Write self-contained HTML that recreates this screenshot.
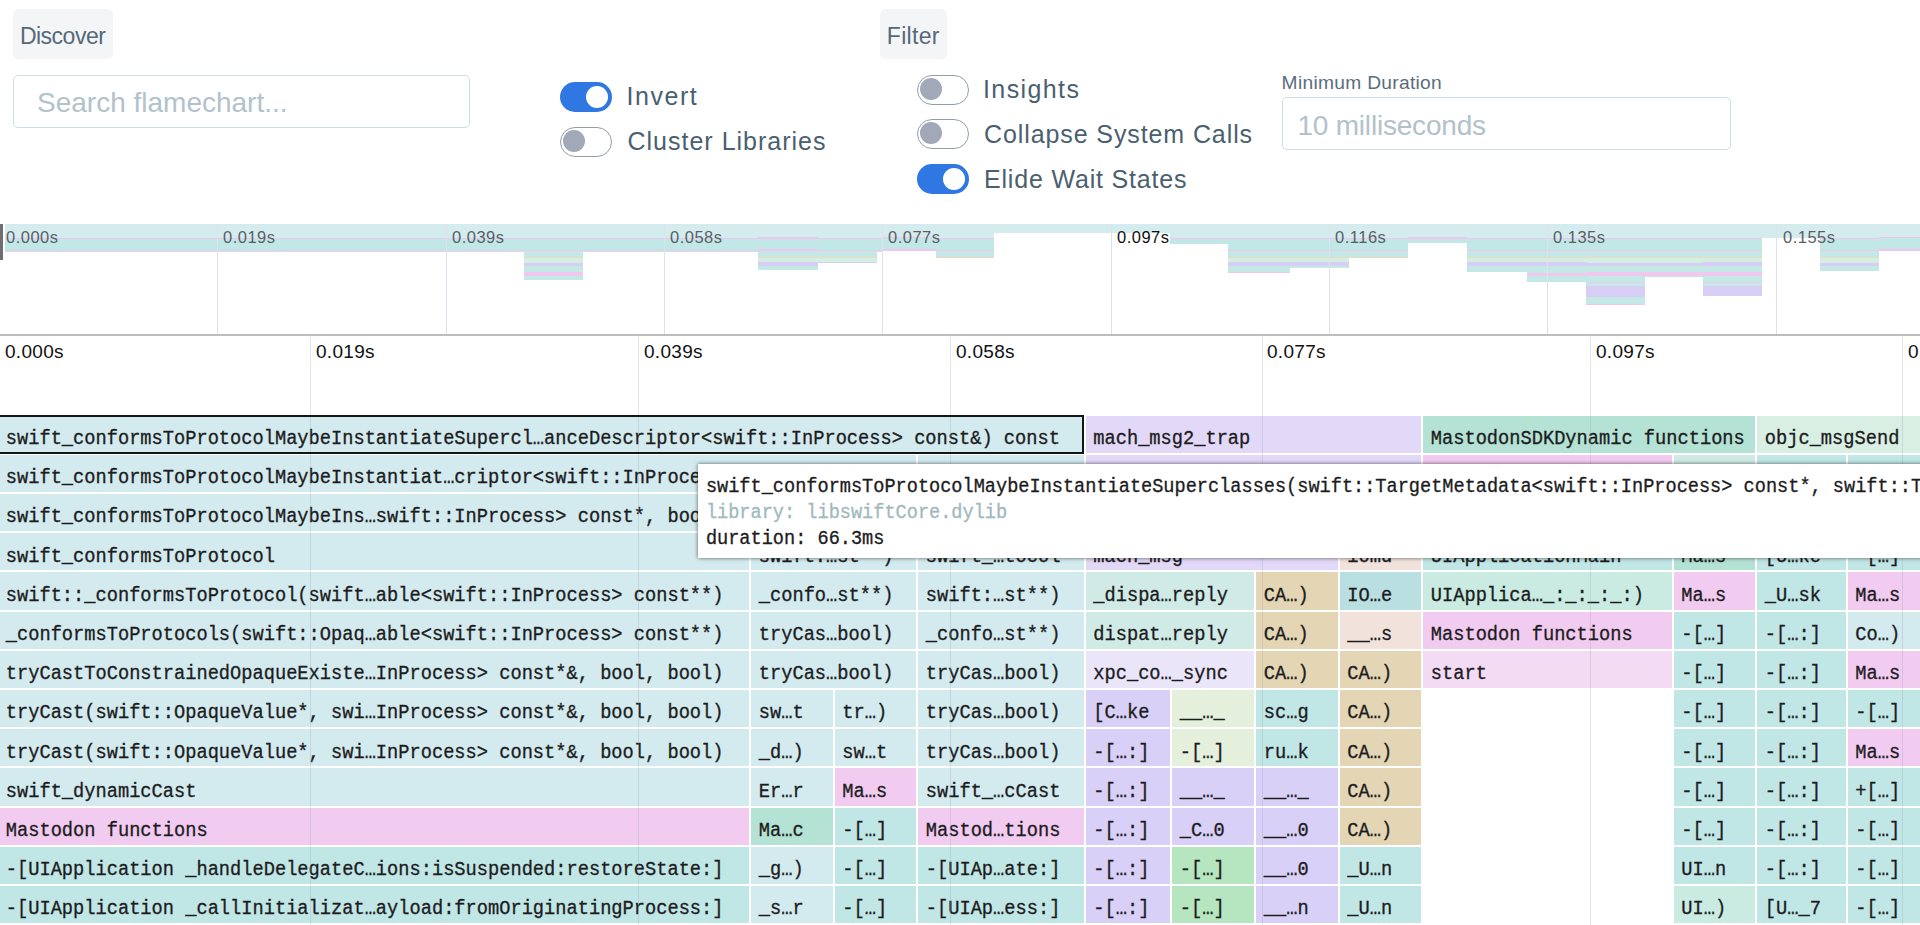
<!DOCTYPE html>
<html><head><meta charset="utf-8">
<style>
*{margin:0;padding:0;box-sizing:border-box}
html,body{width:1920px;height:925px;overflow:hidden;background:#fff;font-family:"Liberation Sans",sans-serif}
.abs{position:absolute}
.btn{position:absolute;top:9px;height:50px;background:#f4f5f7;border-radius:6px;color:#4d6170;font-size:22px;line-height:50px;padding-left:8px}
.inp{position:absolute;border:1.5px solid #cfdce6;border-radius:5px;background:#fff;color:#a9bbc6;font-size:26px}
.tg{position:absolute;width:52px;height:30px;border-radius:15px}
.tg.on{background:#2f77e2}
.tg.on::after{content:"";position:absolute;left:26px;top:4px;width:22px;height:22px;border-radius:50%;background:#fff}
.tg.off{border:1.7px solid #939eaa;background:#fff}
.tg.off::after{content:"";position:absolute;left:2.3px;top:2.3px;width:22px;height:22px;border-radius:50%;background:#a1a9b8}
.lb{position:absolute;line-height:1;white-space:nowrap}
.lbl{position:absolute;color:#4d6170;font-size:24px;line-height:30px;white-space:nowrap}
.mm{position:absolute;top:224px;background:linear-gradient(#d5ecef 0px,#d5ecef 13.5px,#efc6ed 13.5px,#efc6ed 14.5px,#c2e7e7 14.5px,#c2e7e7 25.5px,#efc6ed 25.5px,#efc6ed 27px,#c4e8e6 27px,#c4e8e6 33px,#e8dcc0 33px,#e8dcc0 34px,#d4eee2 34px,#d4eee2 38.5px,#d8cdf5 38.5px,#d8cdf5 42px,#c3e8e6 42px,#c3e8e6 48.5px,#f0c8ee 48.5px,#f0c8ee 52px,#c4e8e6 52px,#c4e8e6 58px,#f0c8ee 58px,#f0c8ee 59px,#c4e8e6 59px,#c4e8e6 62.5px,#d8cdf5 62.5px,#d8cdf5 73px,#c3e8e6 73px,#c3e8e6 80px,#f0c8ee 80px,#f0c8ee 81.5px,#c4e8e6 81.5px,#c4e8e6 120px)}
.mgl{position:absolute;top:224px;height:110px;width:1px;background:#dfe2ea}
.mlab{position:absolute;top:229px;font-size:16.5px;letter-spacing:0.5px;color:#5a5f66;line-height:16px}
.tgl{position:absolute;top:335px;height:590px;width:1px;background:rgba(150,160,180,0.28)}
.tlab{position:absolute;top:342px;font-size:19px;letter-spacing:0.3px;color:#111;line-height:20px}
.b{position:absolute;height:37.2px;font-family:"Liberation Mono",monospace;font-size:18.7px;line-height:37px;padding-left:7.8px;padding-top:5.4px;color:#1d1d1f;white-space:nowrap;overflow:hidden}
.b span{display:inline-block;transform:scaleY(1.11);transform-origin:0 23px;-webkit-text-stroke:0.3px #1a1a1a}
.tt span{display:inline-block;transform:scaleY(1.11);transform-origin:0 20px;-webkit-text-stroke:0.3px #1a1a1a}
.tt span.lib{-webkit-text-stroke:0.3px #9fb9be}
.tt{position:absolute;left:698px;top:463.5px;width:1300px;height:94px;background:#fff;box-shadow:0 0 4px rgba(0,0,0,0.6);font-family:"Liberation Mono",monospace;font-size:18.6px;color:#1d1d1f;white-space:nowrap;padding:11.2px 0 0 7.9px;line-height:26px}
</style></head><body>
<div class="btn" style="left:13px;width:100px"></div>
<div class="inp" style="left:13px;top:75px;width:457px;height:53px"></div>
<div class="tg on" style="left:560px;top:82px"></div>
<div class="tg off" style="left:560px;top:127px"></div>
<div class="btn" style="left:880px;width:67px"></div>
<div class="tg off" style="left:917px;top:75px"></div>
<div class="tg off" style="left:917px;top:119px"></div>
<div class="tg on" style="left:917px;top:164px"></div>
<div class="inp" style="left:1282px;top:97px;width:449px;height:53px"></div>
<div class="lb" style="left:19.90px;top:24.83px;font-size:23px;letter-spacing:-0.5px;color:#55697a">Discover</div>
<div class="lb" style="left:37.00px;top:89.40px;font-size:28px;letter-spacing:0px;color:#b2c2cb">Search flamechart...</div>
<div class="lb" style="left:626.50px;top:83.94px;font-size:25px;letter-spacing:1.55px;color:#4a5f70">Invert</div>
<div class="lb" style="left:627.50px;top:128.59px;font-size:25px;letter-spacing:1.0px;color:#4a5f70">Cluster Libraries</div>
<div class="lb" style="left:886.80px;top:25.03px;font-size:23px;letter-spacing:0.3px;color:#55697a">Filter</div>
<div class="lb" style="left:983.00px;top:76.64px;font-size:25px;letter-spacing:1.4px;color:#4a5f70">Insights</div>
<div class="lb" style="left:984.00px;top:121.94px;font-size:25px;letter-spacing:0.9px;color:#4a5f70">Collapse System Calls</div>
<div class="lb" style="left:984.00px;top:166.54px;font-size:25px;letter-spacing:0.82px;color:#4a5f70">Elide Wait States</div>
<div class="lb" style="left:1281.60px;top:73.45px;font-size:19.2px;letter-spacing:0.3px;color:#5a6d7c">Minimum Duration</div>
<div class="lb" style="left:1297.40px;top:112.30px;font-size:28px;letter-spacing:-0.2px;color:#b2c2cb">10 milliseconds</div>
<!-- minimap -->
<div class="abs" style="left:0;top:224px;width:3px;height:36px;background:#6d6f75"></div>
<div class="mm" style="left:5px;width:519px;height:28px"></div>
<div class="mm" style="left:524px;width:59px;height:56px"></div>
<div class="mm" style="left:583px;width:81px;height:28px"></div>
<div class="mm" style="left:664px;width:94px;height:28px"></div>
<div class="mm" style="left:758px;width:60px;height:46px"></div>
<div class="mm" style="left:818px;width:59px;height:39px"></div>
<div class="mm" style="left:877px;width:5px;height:28px"></div>
<div class="mm" style="left:882px;width:54px;height:27px"></div>
<div class="mm" style="left:936px;width:58px;height:34px"></div>
<div class="mm" style="left:994px;width:117px;height:9px"></div>
<div class="mm" style="left:1111px;width:59px;height:9px"></div>
<div class="mm" style="left:1170px;width:58px;height:20px"></div>
<div class="mm" style="left:1228px;width:62px;height:49px"></div>
<div class="mm" style="left:1290px;width:59px;height:44px"></div>
<div class="mm" style="left:1349px;width:59px;height:34px"></div>
<div class="mm" style="left:1408px;width:59px;height:19px"></div>
<div class="mm" style="left:1467px;width:60px;height:48px"></div>
<div class="mm" style="left:1527px;width:59px;height:58px"></div>
<div class="mm" style="left:1586px;width:59px;height:81px"></div>
<div class="mm" style="left:1645px;width:58px;height:53px"></div>
<div class="mm" style="left:1703px;width:59px;height:72px"></div>
<div class="mm" style="left:1762px;width:58px;height:14px"></div>
<div class="mm" style="left:1820px;width:59px;height:47px"></div>
<div class="mm" style="left:1879px;width:41px;height:27px"></div>
<div class="mgl" style="left:217px"></div><div class="mgl" style="left:446px"></div><div class="mgl" style="left:664px"></div><div class="mgl" style="left:882px"></div>
<div class="mgl" style="left:1111px"></div><div class="mgl" style="left:1329px"></div><div class="mgl" style="left:1547px"></div><div class="mgl" style="left:1776px"></div>
<div class="mlab" style="left:6px">0.000s</div><div class="mlab" style="left:223px">0.019s</div><div class="mlab" style="left:452px">0.039s</div><div class="mlab" style="left:670px">0.058s</div>
<div class="mlab" style="left:888px">0.077s</div><div class="mlab" style="left:1117px;color:#111">0.097s</div><div class="mlab" style="left:1335px">0.116s</div><div class="mlab" style="left:1553px">0.135s</div><div class="mlab" style="left:1783px">0.155s</div>
<div class="abs" style="left:0;top:334px;width:1920px;height:1.5px;background:#bdbdbd"></div>
<!-- time axis -->
<div class="tlab" style="left:5px">0.000s</div><div class="tlab" style="left:316px">0.019s</div><div class="tlab" style="left:644px">0.039s</div>
<div class="tlab" style="left:956px">0.058s</div><div class="tlab" style="left:1267px">0.077s</div><div class="tlab" style="left:1596px">0.097s</div><div class="tlab" style="left:1908px">0.116s</div>
<!-- flamechart -->
<div class="b" style="left:-2px;top:415.600px;width:1085.50px;background:#d3eaee"><span>swift_conformsToProtocolMaybeInstantiateSupercl…anceDescriptor&lt;swift::InProcess&gt; const&amp;) const</span></div>
<div class="b" style="left:1085.5px;top:415.600px;width:335.50px;background:#e2d8f8"><span>mach_msg2_trap</span></div>
<div class="b" style="left:1423px;top:415.600px;width:332.00px;background:#b4e2d4"><span>MastodonSDKDynamic functions</span></div>
<div class="b" style="left:1757px;top:415.600px;width:163.00px;background:#d9efe4"><span>objc_msgSend</span></div>
<div class="b" style="left:-2px;top:454.800px;width:918.00px;background:#d3eaee"><span>swift_conformsToProtocolMaybeInstantiat…criptor&lt;swift::InProcess&gt; const*) const</span></div>
<div class="b" style="left:918px;top:454.800px;width:165.50px;background:#d3eaee"><span>swift_…tocol</span></div>
<div class="b" style="left:1085.5px;top:454.800px;width:335.50px;background:#e2d8f8"><span>mach_msg2_trap</span></div>
<div class="b" style="left:1423px;top:454.800px;width:248.50px;background:#f1cbf0"><span>Mastodon functions</span></div>
<div class="b" style="left:1673.5px;top:454.800px;width:81.50px;background:#d0ebe6"><span>Ma…s</span></div>
<div class="b" style="left:1757px;top:454.800px;width:88.50px;background:#c1e6e6"><span>_U…sk</span></div>
<div class="b" style="left:1847.5px;top:454.800px;width:72.50px;background:#c1e6e6"><span>-[…]</span></div>
<div class="b" style="left:-2px;top:494.000px;width:918.00px;background:#d3eaee"><span>swift_conformsToProtocolMaybeIns…swift::InProcess&gt; const*, bool) const</span></div>
<div class="b" style="left:918px;top:494.000px;width:165.50px;background:#d3eaee"><span>swift_…tocol</span></div>
<div class="b" style="left:1085.5px;top:494.000px;width:335.50px;background:#e2d8f8"><span>mach_msg2_trap</span></div>
<div class="b" style="left:1423px;top:494.000px;width:248.50px;background:#c1e6e6"><span>UIApplicationMain</span></div>
<div class="b" style="left:1673.5px;top:494.000px;width:81.50px;background:#b4e2d4"><span>Ma…s</span></div>
<div class="b" style="left:1757px;top:494.000px;width:88.50px;background:#c1e6e6"><span>[U…ke</span></div>
<div class="b" style="left:1847.5px;top:494.000px;width:72.50px;background:#c1e6e6"><span>-[…]</span></div>
<div class="b" style="left:-2px;top:533.200px;width:751.00px;background:#d3eaee"><span>swift_conformsToProtocol</span></div>
<div class="b" style="left:751px;top:533.200px;width:165.00px;background:#d3eaee"><span>swift:…st**)</span></div>
<div class="b" style="left:918px;top:533.200px;width:165.50px;background:#d3eaee"><span>swift_…tocol</span></div>
<div class="b" style="left:1085.5px;top:533.200px;width:252.00px;background:#e2d8f8"><span>mach_msg</span></div>
<div class="b" style="left:1339.5px;top:533.200px;width:81.50px;background:#f1e2dc"><span>iomd</span></div>
<div class="b" style="left:1423px;top:533.200px;width:248.50px;background:#c1e6e6"><span>UIApplicationMain</span></div>
<div class="b" style="left:1673.5px;top:533.200px;width:81.50px;background:#b4e2d4"><span>Ma…s</span></div>
<div class="b" style="left:1757px;top:533.200px;width:88.50px;background:#c1e6e6"><span>[U…ke</span></div>
<div class="b" style="left:1847.5px;top:533.200px;width:72.50px;background:#c1e6e6"><span>-[…]</span></div>
<div class="b" style="left:-2px;top:572.400px;width:751.00px;background:#d3eaee"><span>swift::_conformsToProtocol(swift…able&lt;swift::InProcess&gt; const**)</span></div>
<div class="b" style="left:751px;top:572.400px;width:165.00px;background:#d3eaee"><span>_confo…st**)</span></div>
<div class="b" style="left:918px;top:572.400px;width:165.50px;background:#d3eaee"><span>swift:…st**)</span></div>
<div class="b" style="left:1085.5px;top:572.400px;width:168.50px;background:#d0ebe6"><span>_dispa…reply</span></div>
<div class="b" style="left:1256px;top:572.400px;width:81.50px;background:#e4d6b5"><span>CA…)</span></div>
<div class="b" style="left:1339.5px;top:572.400px;width:81.50px;background:#b9dfe0"><span>IO…e</span></div>
<div class="b" style="left:1423px;top:572.400px;width:248.50px;background:#c9ebe1"><span>UIApplica…_:_:_:_:)</span></div>
<div class="b" style="left:1673.5px;top:572.400px;width:81.50px;background:#f1cbf0"><span>Ma…s</span></div>
<div class="b" style="left:1757px;top:572.400px;width:88.50px;background:#c1e6e6"><span>_U…sk</span></div>
<div class="b" style="left:1847.5px;top:572.400px;width:72.50px;background:#f1cbf0"><span>Ma…s</span></div>
<div class="b" style="left:-2px;top:611.600px;width:751.00px;background:#d3eaee"><span>_conformsToProtocols(swift::Opaq…able&lt;swift::InProcess&gt; const**)</span></div>
<div class="b" style="left:751px;top:611.600px;width:165.00px;background:#d3eaee"><span>tryCas…bool)</span></div>
<div class="b" style="left:918px;top:611.600px;width:165.50px;background:#d3eaee"><span>_confo…st**)</span></div>
<div class="b" style="left:1085.5px;top:611.600px;width:168.50px;background:#d0ebe6"><span>dispat…reply</span></div>
<div class="b" style="left:1256px;top:611.600px;width:81.50px;background:#e4d6b5"><span>CA…)</span></div>
<div class="b" style="left:1339.5px;top:611.600px;width:81.50px;background:#f1e2dc"><span>__…s</span></div>
<div class="b" style="left:1423px;top:611.600px;width:248.50px;background:#f1cbf0"><span>Mastodon functions</span></div>
<div class="b" style="left:1673.5px;top:611.600px;width:81.50px;background:#c1e6e6"><span>-[…]</span></div>
<div class="b" style="left:1757px;top:611.600px;width:88.50px;background:#c1e6e6"><span>-[…:]</span></div>
<div class="b" style="left:1847.5px;top:611.600px;width:72.50px;background:#d3eaee"><span>Co…)</span></div>
<div class="b" style="left:-2px;top:650.800px;width:751.00px;background:#d3eaee"><span>tryCastToConstrainedOpaqueExiste…InProcess&gt; const*&amp;, bool, bool)</span></div>
<div class="b" style="left:751px;top:650.800px;width:165.00px;background:#d3eaee"><span>tryCas…bool)</span></div>
<div class="b" style="left:918px;top:650.800px;width:165.50px;background:#d3eaee"><span>tryCas…bool)</span></div>
<div class="b" style="left:1085.5px;top:650.800px;width:168.50px;background:#ebe5fa"><span>xpc_co…_sync</span></div>
<div class="b" style="left:1256px;top:650.800px;width:81.50px;background:#e4d6b5"><span>CA…)</span></div>
<div class="b" style="left:1339.5px;top:650.800px;width:81.50px;background:#e4d6b5"><span>CA…)</span></div>
<div class="b" style="left:1423px;top:650.800px;width:248.50px;background:#f2dbf3"><span>start</span></div>
<div class="b" style="left:1673.5px;top:650.800px;width:81.50px;background:#c1e6e6"><span>-[…]</span></div>
<div class="b" style="left:1757px;top:650.800px;width:88.50px;background:#c1e6e6"><span>-[…:]</span></div>
<div class="b" style="left:1847.5px;top:650.800px;width:72.50px;background:#f1cbf0"><span>Ma…s</span></div>
<div class="b" style="left:-2px;top:690.000px;width:751.00px;background:#d3eaee"><span>tryCast(swift::OpaqueValue*, swi…InProcess&gt; const*&amp;, bool, bool)</span></div>
<div class="b" style="left:751px;top:690.000px;width:81.50px;background:#d3eaee"><span>sw…t</span></div>
<div class="b" style="left:834.5px;top:690.000px;width:81.50px;background:#d3eaee"><span>tr…)</span></div>
<div class="b" style="left:918px;top:690.000px;width:165.50px;background:#d3eaee"><span>tryCas…bool)</span></div>
<div class="b" style="left:1085.5px;top:690.000px;width:84.50px;background:#d9d0f8"><span>[C…ke</span></div>
<div class="b" style="left:1172px;top:690.000px;width:82.00px;background:#e4efdc"><span>__…_</span></div>
<div class="b" style="left:1256px;top:690.000px;width:81.50px;background:#c1e6e6"><span>sc…g</span></div>
<div class="b" style="left:1339.5px;top:690.000px;width:81.50px;background:#e4d6b5"><span>CA…)</span></div>
<div class="b" style="left:1673.5px;top:690.000px;width:81.50px;background:#c1e6e6"><span>-[…]</span></div>
<div class="b" style="left:1757px;top:690.000px;width:88.50px;background:#c1e6e6"><span>-[…:]</span></div>
<div class="b" style="left:1847.5px;top:690.000px;width:72.50px;background:#c1e6e6"><span>-[…]</span></div>
<div class="b" style="left:-2px;top:729.200px;width:751.00px;background:#d3eaee"><span>tryCast(swift::OpaqueValue*, swi…InProcess&gt; const*&amp;, bool, bool)</span></div>
<div class="b" style="left:751px;top:729.200px;width:81.50px;background:#d3eaee"><span>_d…)</span></div>
<div class="b" style="left:834.5px;top:729.200px;width:81.50px;background:#d3eaee"><span>sw…t</span></div>
<div class="b" style="left:918px;top:729.200px;width:165.50px;background:#d3eaee"><span>tryCas…bool)</span></div>
<div class="b" style="left:1085.5px;top:729.200px;width:84.50px;background:#d9d0f8"><span>-[…:]</span></div>
<div class="b" style="left:1172px;top:729.200px;width:82.00px;background:#e4efdc"><span>-[…]</span></div>
<div class="b" style="left:1256px;top:729.200px;width:81.50px;background:#c1e6e6"><span>ru…k</span></div>
<div class="b" style="left:1339.5px;top:729.200px;width:81.50px;background:#e4d6b5"><span>CA…)</span></div>
<div class="b" style="left:1673.5px;top:729.200px;width:81.50px;background:#c1e6e6"><span>-[…]</span></div>
<div class="b" style="left:1757px;top:729.200px;width:88.50px;background:#c1e6e6"><span>-[…:]</span></div>
<div class="b" style="left:1847.5px;top:729.200px;width:72.50px;background:#f1cbf0"><span>Ma…s</span></div>
<div class="b" style="left:-2px;top:768.400px;width:751.00px;background:#d3eaee"><span>swift_dynamicCast</span></div>
<div class="b" style="left:751px;top:768.400px;width:81.50px;background:#d3eaee"><span>Er…r</span></div>
<div class="b" style="left:834.5px;top:768.400px;width:81.50px;background:#f1cbf0"><span>Ma…s</span></div>
<div class="b" style="left:918px;top:768.400px;width:165.50px;background:#d3eaee"><span>swift_…cCast</span></div>
<div class="b" style="left:1085.5px;top:768.400px;width:84.50px;background:#d9d0f8"><span>-[…:]</span></div>
<div class="b" style="left:1172px;top:768.400px;width:82.00px;background:#d9d0f8"><span>__…_</span></div>
<div class="b" style="left:1256px;top:768.400px;width:81.50px;background:#d9d0f8"><span>__…_</span></div>
<div class="b" style="left:1339.5px;top:768.400px;width:81.50px;background:#e4d6b5"><span>CA…)</span></div>
<div class="b" style="left:1673.5px;top:768.400px;width:81.50px;background:#c1e6e6"><span>-[…]</span></div>
<div class="b" style="left:1757px;top:768.400px;width:88.50px;background:#c1e6e6"><span>-[…:]</span></div>
<div class="b" style="left:1847.5px;top:768.400px;width:72.50px;background:#c1e6e6"><span>+[…]</span></div>
<div class="b" style="left:-2px;top:807.600px;width:751.00px;background:#f1cbf0"><span>Mastodon functions</span></div>
<div class="b" style="left:751px;top:807.600px;width:81.50px;background:#b4e2d4"><span>Ma…c</span></div>
<div class="b" style="left:834.5px;top:807.600px;width:81.50px;background:#c1e6e6"><span>-[…]</span></div>
<div class="b" style="left:918px;top:807.600px;width:165.50px;background:#f1cbf0"><span>Mastod…tions</span></div>
<div class="b" style="left:1085.5px;top:807.600px;width:84.50px;background:#d9d0f8"><span>-[…:]</span></div>
<div class="b" style="left:1172px;top:807.600px;width:82.00px;background:#d9d0f8"><span>_C…0</span></div>
<div class="b" style="left:1256px;top:807.600px;width:81.50px;background:#d9d0f8"><span>__…0</span></div>
<div class="b" style="left:1339.5px;top:807.600px;width:81.50px;background:#e4d6b5"><span>CA…)</span></div>
<div class="b" style="left:1673.5px;top:807.600px;width:81.50px;background:#c1e6e6"><span>-[…]</span></div>
<div class="b" style="left:1757px;top:807.600px;width:88.50px;background:#c1e6e6"><span>-[…:]</span></div>
<div class="b" style="left:1847.5px;top:807.600px;width:72.50px;background:#c1e6e6"><span>-[…]</span></div>
<div class="b" style="left:-2px;top:846.800px;width:751.00px;background:#c1e6e6"><span>-[UIApplication _handleDelegateC…ions:isSuspended:restoreState:]</span></div>
<div class="b" style="left:751px;top:846.800px;width:81.50px;background:#d3eaee"><span>_g…)</span></div>
<div class="b" style="left:834.5px;top:846.800px;width:81.50px;background:#c1e6e6"><span>-[…]</span></div>
<div class="b" style="left:918px;top:846.800px;width:165.50px;background:#c1e6e6"><span>-[UIAp…ate:]</span></div>
<div class="b" style="left:1085.5px;top:846.800px;width:84.50px;background:#d9d0f8"><span>-[…:]</span></div>
<div class="b" style="left:1172px;top:846.800px;width:82.00px;background:#b5e6bf"><span>-[…]</span></div>
<div class="b" style="left:1256px;top:846.800px;width:81.50px;background:#d9d0f8"><span>__…0</span></div>
<div class="b" style="left:1339.5px;top:846.800px;width:81.50px;background:#c1e6e6"><span>_U…n</span></div>
<div class="b" style="left:1673.5px;top:846.800px;width:81.50px;background:#c1e6e6"><span>UI…n</span></div>
<div class="b" style="left:1757px;top:846.800px;width:88.50px;background:#c1e6e6"><span>-[…:]</span></div>
<div class="b" style="left:1847.5px;top:846.800px;width:72.50px;background:#c1e6e6"><span>-[…]</span></div>
<div class="b" style="left:-2px;top:886.000px;width:751.00px;background:#c1e6e6"><span>-[UIApplication _callInitializat…ayload:fromOriginatingProcess:]</span></div>
<div class="b" style="left:751px;top:886.000px;width:81.50px;background:#d3eaee"><span>_s…r</span></div>
<div class="b" style="left:834.5px;top:886.000px;width:81.50px;background:#c1e6e6"><span>-[…]</span></div>
<div class="b" style="left:918px;top:886.000px;width:165.50px;background:#c1e6e6"><span>-[UIAp…ess:]</span></div>
<div class="b" style="left:1085.5px;top:886.000px;width:84.50px;background:#d9d0f8"><span>-[…:]</span></div>
<div class="b" style="left:1172px;top:886.000px;width:82.00px;background:#b5e6bf"><span>-[…]</span></div>
<div class="b" style="left:1256px;top:886.000px;width:81.50px;background:#d9d0f8"><span>__…n</span></div>
<div class="b" style="left:1339.5px;top:886.000px;width:81.50px;background:#c1e6e6"><span>_U…n</span></div>
<div class="b" style="left:1673.5px;top:886.000px;width:81.50px;background:#c9ebe1"><span>UI…)</span></div>
<div class="b" style="left:1757px;top:886.000px;width:88.50px;background:#c1e6e6"><span>[U…_7</span></div>
<div class="b" style="left:1847.5px;top:886.000px;width:72.50px;background:#c1e6e6"><span>-[…]</span></div>

<div class="tgl" style="left:310px"></div><div class="tgl" style="left:638px"></div><div class="tgl" style="left:950px"></div>
<div class="tgl" style="left:1262px"></div><div class="tgl" style="left:1590px"></div><div class="tgl" style="left:1902px"></div>
<div class="abs" style="left:-4px;top:415px;width:1088.3px;height:38.8px;border:2px solid #151515"></div>
<div class="tt"><span>swift_conformsToProtocolMaybeInstantiateSuperclasses(swift::TargetMetadata&lt;swift::InProcess&gt; const*, swift::TargetProtocolDescriptor&lt;swift::InProcess&gt; const*)</span><br><span class="lib" style="color:#9fb9be">library: libswiftCore.dylib</span><br><span>duration: 66.3ms</span></div>
</body></html>
